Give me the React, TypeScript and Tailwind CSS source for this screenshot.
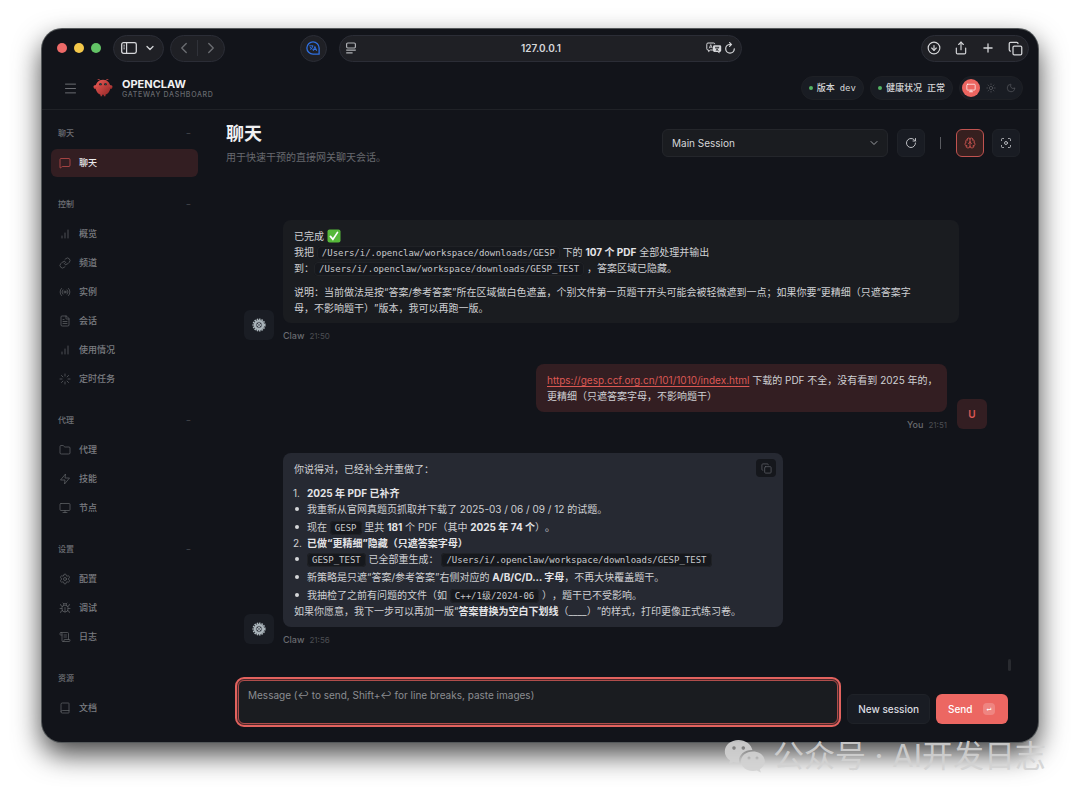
import React, { useState } from 'react';
import {
  Book,
  Brain,
  Bug,
  ChevronDown,
  ChevronLeft,
  ChevronRight,
  CircleArrowDown,
  Copy,
  FileText,
  Focus,
  Folder,
  Link,
  Loader,
  Menu,
  MessageSquare,
  Monitor,
  Moon,
  Plus,
  Radio,
  RotateCw,
  ScrollText,
  Settings,
  Share,
  Sun,
} from 'lucide-react';

type IconProps = { className?: string; strokeWidth?: number };
type IconType = React.ComponentType<IconProps>;

const Bars: React.FC<IconProps> = ({ className, strokeWidth = 1.5 }) => (
  <svg viewBox="0 0 24 24" fill="none" stroke="currentColor" strokeWidth={strokeWidth} strokeLinecap="round" className={className}>
    <path d="M12 20V10M18 20V4M6 20v-4" />
  </svg>
);

const Bolt: React.FC<IconProps> = ({ className, strokeWidth = 1.5 }) => (
  <svg viewBox="0 0 24 24" fill="none" stroke="currentColor" strokeWidth={strokeWidth} strokeLinejoin="round" className={className}>
    <path d="M13 2 3 14h9l-1 8 10-12h-9l1-8z" />
  </svg>
);

const SidebarIcon: React.FC<IconProps> = ({ className }) => (
  <svg viewBox="0 0 16 12" fill="none" stroke="currentColor" className={className}>
    <rect x="0.7" y="0.7" width="14.6" height="10.6" rx="1.8" strokeWidth="1.3" />
    <path d="M5.6 1v10" strokeWidth="1.2" />
    <path d="M2.3 3.2h1.7M2.3 5h1.7M2.3 6.8h1.7" strokeWidth="0.8" />
  </svg>
);

const PageIcon: React.FC<IconProps> = ({ className }) => (
  <svg viewBox="0 0 12 12" fill="none" stroke="currentColor" className={className}>
    <rect x="1.6" y="1" width="8.8" height="5" rx="1.2" strokeWidth="1.2" />
    <path d="M1.2 8.2h9.6M1.2 10.8h6.4" strokeWidth="1.2" />
  </svg>
);

const TranslateBubble: React.FC<IconProps> = ({ className }) => (
  <svg viewBox="0 0 16 16" fill="none" stroke="currentColor" className={className}>
    <path d="M15 8a7 7 0 1 0-7 7h7V8z" strokeWidth="1.5" strokeLinejoin="round" />
    <path d="M3.8 5.5h4.6M4.6 9.6c1.8-.6 2.8-2 3.1-4M4.6 6.8c.6 1.4 1.6 2.4 3 2.8" strokeWidth="1.1" />
    <path d="m8.2 11.2 2-4.6 2 4.6M9 9.8h2.6" strokeWidth="1.2" />
  </svg>
);

const TranslatePage: React.FC<IconProps> = ({ className }) => (
  <svg viewBox="0 0 16 12" fill="none" className={className}>
    <path d="M7 8H4.4L2.6 9.6V8H2A1.2 1.2 0 0 1 .8 6.8V2.2A1.2 1.2 0 0 1 2 1h5.6a1.2 1.2 0 0 1 1.2 1.2" stroke="currentColor" />
    <path d="m3.2 6.4 1.6-3.8 1.6 3.8M3.8 5.2h2" stroke="currentColor" strokeWidth="0.8" />
    <path d="M8.4 3.2h5.4a1.4 1.4 0 0 1 1.4 1.4v4a1.4 1.4 0 0 1-1.4 1.4h-.3v1.6L11.7 10H8.4A1.4 1.4 0 0 1 7 8.6v-4a1.4 1.4 0 0 1 1.4-1.4z" fill="currentColor" />
    <path d="M9 5.3h4.2M9.8 8.7c1.4-.7 2.2-1.8 2.4-3.2M9.9 6.2c.5 1.2 1.4 2.1 2.7 2.5" stroke="#1f2025" strokeWidth="0.9" />
  </svg>
);

const ReloadIcon: React.FC<IconProps> = ({ className }) => (
  <svg viewBox="0 0 12 12" fill="none" stroke="currentColor" strokeWidth="1.2" strokeLinecap="round" className={className}>
    <path d="M10.3 6.8A4.3 4.3 0 1 1 6 2.5h1M5.6.7l1.8 1.8-1.8 1.8" />
  </svg>
);

const LobsterLogo: React.FC<IconProps> = ({ className }) => (
  <svg viewBox="0 0 120 120" className={className} aria-hidden="true">
    <defs>
      <linearGradient id="lobster" x1="0" y1="0" x2="1" y2="1">
        <stop offset="0" stopColor="#ec5a55" />
        <stop offset="1" stopColor="#8f2626" />
      </linearGradient>
    </defs>
    <path d="M60 10C30 10 15 35 15 55s15 40 30 45v10h10v-10s5 2 10 0v10h10v-10c15-5 30-25 30-45S90 10 60 10z" fill="url(#lobster)" />
    <path d="M20 45C5 40 0 50 5 60s15 5 20-5 0-10-5-10zM100 45c15-5 20 5 15 15s-15 5-20-5 0-10 5-10z" fill="url(#lobster)" />
    <path d="M45 15Q35 5 30 8M75 15Q85 5 90 8" stroke="#e0524e" strokeWidth="4" strokeLinecap="round" fill="none" />
    <circle cx="45" cy="37" r="7" fill="#11151c" />
    <circle cx="75" cy="37" r="7" fill="#11151c" />
    <circle cx="46" cy="36" r="3" fill="#3ba99d" />
    <circle cx="76" cy="36" r="3" fill="#3ba99d" />
  </svg>
);

const GearEmoji: React.FC<IconProps> = ({ className }) => (
  <svg viewBox="0 0 24 24" fill="none" className={className}>
    <circle cx="12" cy="12" r="10" stroke="#aeb8be" strokeWidth="2.6" strokeDasharray="2.6 1.588" />
    <circle cx="12" cy="12" r="6.8" stroke="#aab4ba" strokeWidth="4.4" />
    <circle cx="12" cy="12" r="5" stroke="#7d8790" strokeWidth="1" />
    <circle cx="12" cy="12" r="2.6" fill="#59626b" stroke="#c5cdd2" strokeWidth="1.5" />
  </svg>
);

const CheckEmoji = () => (
  <svg viewBox="0 0 14 14" role="img" aria-label="完成" className="inline size-[14px] align-[-3px]">
    <rect x="0.5" y="0.5" width="13" height="13" rx="2" fill="#56b83a" />
    <path d="m3.4 7.4 2.5 3 4.6-7" stroke="#fff" strokeWidth="1.7" fill="none" strokeLinecap="round" />
  </svg>
);

const WeChatIcon: React.FC<IconProps> = ({ className }) => (
  <svg viewBox="0 0 42 34" className={className} aria-hidden="true">
    <path
      fillRule="evenodd"
      d="M14.5 1C6.8 1 .8 6.1.8 12.6c0 3.7 2 6.9 5.2 9l-1.3 4 4.7-2.4c1.9.6 4 .9 6 .8A11 11 0 0 1 15 21.7c0-5.9 5.7-10.6 12.7-10.6h.7C27.2 5.2 21.3 1 14.5 1zM10 7.3a1.8 1.8 0 1 1 0 3.6 1.8 1.8 0 0 1 0-3.6zm9.3 0a1.8 1.8 0 1 1 0 3.6 1.8 1.8 0 0 1 0-3.6z"
      fill="currentColor"
    />
    <path
      fillRule="evenodd"
      d="M29 12.6c-6.8 0-12 4.3-12 9.7s5.2 9.7 12 9.7c1.3 0 2.7-.2 3.9-.5l4 2.1-1.1-3.3c3-1.8 5-4.7 5-8 0-5.4-5.2-9.7-11.8-9.7zm-4 5a1.5 1.5 0 1 1 0 3 1.5 1.5 0 0 1 0-3zm8 0a1.5 1.5 0 1 1 0 3 1.5 1.5 0 0 1 0-3z"
      fill="currentColor"
    />
  </svg>
);

const navGroups: { title: string; collapsible: boolean; items: { label: string; icon: IconType }[] }[] = [
  { title: '聊天', collapsible: true, items: [{ label: '聊天', icon: MessageSquare }] },
  {
    title: '控制',
    collapsible: true,
    items: [
      { label: '概览', icon: Bars },
      { label: '频道', icon: Link },
      { label: '实例', icon: Radio },
      { label: '会话', icon: FileText },
      { label: '使用情况', icon: Bars },
      { label: '定时任务', icon: Loader },
    ],
  },
  {
    title: '代理',
    collapsible: true,
    items: [
      { label: '代理', icon: Folder },
      { label: '技能', icon: Bolt },
      { label: '节点', icon: Monitor },
    ],
  },
  {
    title: '设置',
    collapsible: true,
    items: [
      { label: '配置', icon: Settings },
      { label: '调试', icon: Bug },
      { label: '日志', icon: ScrollText },
    ],
  },
  { title: '资源', collapsible: false, items: [{ label: '文档', icon: Book }] },
];

const BrowserBar = () => (
  <div className="flex h-[38px] shrink-0 items-center px-[14px] text-[#d5d6d9]">
    <div className="flex flex-1 items-center">
      <div className="flex gap-[7px] pl-px">
        <span className="size-[10px] rounded-full bg-[#ed6a68]" />
        <span className="size-[10px] rounded-full bg-[#f4c84a]" />
        <span className="size-[10px] rounded-full bg-[#63c466]" />
      </div>
      <div className="ml-3 flex h-[27px] items-center rounded-full border border-[#2b2d36] bg-[#1f2025] px-[7px]">
        <button type="button" aria-label="Sidebar"><SidebarIcon className="h-3 w-4" /></button>
        <button type="button" aria-label="Tab groups" className="ml-[7px]"><ChevronDown className="size-3" strokeWidth={2.5} /></button>
      </div>
      <div className="ml-[6px] flex h-[27px] items-center rounded-full border border-[#2b2d36] bg-[#1f2025] px-1 text-[#6b6d72]">
        <button type="button" aria-label="Back"><ChevronLeft className="size-[18px]" strokeWidth={1.8} /></button>
        <span className="mx-1 h-4 w-px bg-[#303239]" />
        <button type="button" aria-label="Forward"><ChevronRight className="size-[18px]" strokeWidth={1.8} /></button>
      </div>
      <button
        type="button"
        aria-label="Translate extension"
        className="mr-3 ml-auto flex size-[27px] items-center justify-center rounded-full border border-[#2b2d36] bg-[#1f2025] text-[#2f6fdf]"
      >
        <TranslateBubble className="size-[14px]" />
      </button>
    </div>
    <div className="flex h-[27px] w-[403px] items-center rounded-full border border-[#2b2d36] bg-[#1f2025] px-[5px]">
      <PageIcon className="size-3 text-[#b0b1b5]" />
      <span className="flex-1 pl-5 text-center text-[10px] font-semibold">127.0.0.1</span>
      <TranslatePage className="h-3 w-4" />
      <button type="button" aria-label="Reload" className="ml-[2px]"><ReloadIcon className="size-3" /></button>
    </div>
    <div className="flex flex-1 justify-end">
      <div className="-mr-[5px] flex h-[27px] items-center gap-[13px] rounded-full border border-[#2b2d36] bg-[#1f2025] px-[5px]">
        <button type="button" aria-label="Downloads"><CircleArrowDown className="size-[14px]" strokeWidth={2} /></button>
        <button type="button" aria-label="Share"><Share className="size-[14px]" strokeWidth={2} /></button>
        <button type="button" aria-label="New tab"><Plus className="size-[14px]" strokeWidth={2.2} /></button>
        <button type="button" aria-label="Tab overview"><Copy className="size-[15px]" strokeWidth={2} /></button>
      </div>
    </div>
  </div>
);

const StatusPill = ({ label, children }: { label: string; children: React.ReactNode }) => (
  <div className="flex h-6 items-center rounded-full border border-[#1e2025] bg-[#191c23] px-[7px] text-[9px] leading-3 font-medium text-[#d5d6d8]">
    <span className="mr-1 size-1 rounded-full bg-[#53b463]" />
    <span>{label}</span>
    <span className="ml-[5px]">{children}</span>
  </div>
);

const Header = () => (
  <header className="flex h-[43px] shrink-0 items-center border-b border-[#202227] pr-[15px] pl-5">
    <button type="button" aria-label="Toggle menu" className="flex size-4 items-center justify-center text-[#707277]">
      <Menu className="size-[15px]" strokeWidth={1.5} />
    </button>
    <LobsterLogo className="ml-[15px] size-5" />
    <div className="ml-[9px] pt-[2px]">
      <div className="text-[11px] leading-3 font-bold text-[#f0f0f2]">OPENCLAW</div>
      <div className="text-[7px] leading-[10px] font-medium tracking-widest text-[#67696e]">GATEWAY DASHBOARD</div>
    </div>
    <div className="ml-auto flex items-center gap-[6px]">
      <StatusPill label="版本">
        <span className="font-['DejaVu_Sans_Mono',monospace] font-normal">dev</span>
      </StatusPill>
      <StatusPill label="健康状况">正常</StatusPill>
      <div className="flex h-6 items-center gap-px rounded-full border border-[#1e2025] bg-[#191c23] px-[2px] text-[#5a5c62]">
        <button type="button" aria-label="System theme" className="flex size-[18px] items-center justify-center rounded-full bg-[#ec6560] text-white">
          <Monitor className="size-[10px]" strokeWidth={1.7} />
        </button>
        <button type="button" aria-label="Light theme" className="flex size-[19px] items-center justify-center">
          <Sun className="size-[10px]" strokeWidth={1.6} />
        </button>
        <button type="button" aria-label="Dark theme" className="flex size-[19px] items-center justify-center">
          <Moon className="size-[10px]" strokeWidth={1.6} />
        </button>
      </div>
    </div>
  </header>
);

const Sidebar = ({ active, onSelect }: { active: string; onSelect: (id: string) => void }) => (
  <nav className="flex w-[156px] shrink-0 flex-col gap-[15px] pt-[11px] pl-[9px]">
    {navGroups.map((group) => (
      <div key={group.title} className="flex flex-col gap-px">
        <div className="mb-[3px] flex h-6 items-center justify-between px-[7px] text-[8px] font-medium text-[#6d6f74]">
          <span>{group.title}</span>
          {group.collapsible && <span className="text-[#45474c]">−</span>}
        </div>
        {group.items.map(({ label, icon: Icon }) => {
          const id = `${group.title}/${label}`;
          const selected = id === active;
          return (
            <button
              key={id}
              type="button"
              onClick={() => onSelect(id)}
              className={`flex h-7 items-center gap-2 rounded-md px-2 text-[9px] font-medium ${
                selected ? 'bg-[#331e22] text-[#ececee]' : 'text-[#7b7d81]'
              }`}
            >
              <Icon className={`size-3 ${selected ? 'text-[#c9504e]' : 'text-[#5f6166]'}`} strokeWidth={1.5} />
              {label}
            </button>
          );
        })}
      </div>
    ))}
  </nav>
);

const Code = ({ children }: { children: React.ReactNode }) => (
  <code className="rounded-sm border border-[#202226] bg-[#16181d] px-1 py-px font-['DejaVu_Sans_Mono','Noto_Sans_CJK_SC',monospace] text-[9px] leading-3 text-[#c9cacd]">
    {children}
  </code>
);

const Strong = ({ children }: { children: React.ReactNode }) => (
  <strong className="font-bold text-[#e4e4e7]">{children}</strong>
);

const Avatar = ({ user }: { user?: boolean }) =>
  user ? (
    <div className="mb-1 flex size-[30px] shrink-0 items-center justify-center rounded-md bg-[#331e22] text-[10px] font-semibold text-[#dc5854]">U</div>
  ) : (
    <div className="mb-1 flex size-[30px] shrink-0 items-center justify-center rounded-md bg-[#1a1d24]">
      <GearEmoji className="size-[14px]" />
    </div>
  );

const Meta = ({ name, time }: { name: string; time: string }) => (
  <div className="mt-[5px] flex h-4 items-center gap-[5px] text-[9px]">
    <span className="font-medium text-[#696b70]">{name}</span>
    <span className="text-[8px] text-[#4c4e53]">{time}</span>
  </div>
);

const Bullet = ({ children }: { children: React.ReactNode }) => (
  <li className="flex">
    <span className="flex w-[13px] shrink-0 items-center pl-[1px]">
      <span className="size-1 rounded-full bg-[#d5d6d9]" />
    </span>
    <span>{children}</span>
  </li>
);

const Thread = () => (
  <div className="flex flex-1 flex-col gap-5 pr-[33px] pl-[18px] text-[10px] leading-4 text-[#cfd0d3] [text-spacing-trim:space-all]">
    <div className="flex items-end gap-[9px]">
      <Avatar />
      <div className="mr-7 flex-1">
        <div className="rounded-lg bg-[#1a1c20] px-[11px] pt-2 pb-[7px]">
          <p>
            已完成 <CheckEmoji />
            <br />
            我把 <Code>/Users/i/.openclaw/workspace/downloads/GESP</Code> 下的 <Strong>107 个 PDF</Strong> 全部处理并输出
            <br />
            到：<Code>/Users/i/.openclaw/workspace/downloads/GESP_TEST</Code> ，答案区域已隐藏。
          </p>
          <p className="mt-2">
            说明：当前做法是按“答案/参考答案”所在区域做白色遮盖，个别文件第一页题干开头可能会被轻微遮到一点；如果你要“更精细（只遮答案字
            <br />
            母，不影响题干）”版本，我可以再跑一版。
          </p>
        </div>
        <Meta name="Claw" time="21:50" />
      </div>
    </div>

    <div className="flex items-end justify-end gap-[10px]">
      <div className="flex flex-col items-end">
        <div className="w-[411px] rounded-lg bg-[#331e22] py-2 pr-1 pl-[11px]">
          <a href="https://gesp.ccf.org.cn/101/1010/index.html" className="text-[#dc5854] underline underline-offset-2">
            https://gesp.ccf.org.cn/101/1010/index.html
          </a>{' '}
          下载的 PDF 不全，没有看到 2025 年的，
          <br />
          更精细（只遮答案字母，不影响题干）
        </div>
        <Meta name="You" time="21:51" />
      </div>
      <Avatar user />
    </div>

    <div className="flex items-end gap-[9px]">
      <Avatar />
      <div>
        <div className="relative w-[500px] rounded-lg bg-[#262932] px-[11px] py-2">
          <button
            type="button"
            aria-label="Copy message"
            className="absolute top-[6px] right-[7px] flex h-[18px] w-5 items-center justify-center rounded bg-[#15171c] text-[#5c5e64]"
          >
            <Copy className="size-[11px]" strokeWidth={1.7} />
          </button>
          <p>你说得对，已经补全并重做了：</p>
          <div className="mt-2 flex">
            <span className="-ml-px w-[14px]">1.</span>
            <Strong>2025 年 PDF 已补齐</Strong>
          </div>
          <ul className="flex flex-col gap-[2px]">
            <Bullet>我重新从官网真题页抓取并下载了 2025-03 / 06 / 09 / 12 的试题。</Bullet>
            <Bullet>
              现在 <Code>GESP</Code> 里共 <Strong>181</Strong> 个 PDF（其中 <Strong>2025 年 74 个</Strong>）。
            </Bullet>
          </ul>
          <div className="flex">
            <span className="-ml-px w-[14px]">2.</span>
            <Strong>已做“更精细”隐藏（只遮答案字母）</Strong>
          </div>
          <ul className="flex flex-col gap-[2px]">
            <Bullet>
              <Code>GESP_TEST</Code> 已全部重生成： <Code>/Users/i/.openclaw/workspace/downloads/GESP_TEST</Code>
            </Bullet>
            <Bullet>
              新策略是只遮“答案/参考答案”右侧对应的 <Strong>A/B/C/D… 字母</Strong>，不再大块覆盖题干。
            </Bullet>
            <Bullet>
              我抽检了之前有问题的文件（如 <Code>C++/1级/2024-06</Code> ），题干已不受影响。
            </Bullet>
          </ul>
          <p>
            如果你愿意，我下一步可以再加一版“<Strong>答案替换为空白下划线</Strong>（____）”的样式，打印更像正式练习卷。
          </p>
        </div>
        <Meta name="Claw" time="21:56" />
      </div>
    </div>
  </div>
);

const Composer = () => {
  const [draft, setDraft] = useState('');
  return (
    <form className="mr-3 ml-[9px] flex items-end gap-[6px] pb-[15px]" onSubmit={(e) => e.preventDefault()}>
      <div className="flex flex-1 rounded-[9px] border-2 border-[#e2625e] bg-[#4b282b] p-px">
        <textarea
          aria-label="Message"
          value={draft}
          onChange={(e) => setDraft(e.target.value)}
          placeholder="Message (↩ to send, Shift+↩ for line breaks, paste images)"
          className="block h-[44px] w-full resize-none rounded-md border border-[#b04d4b] bg-[#1a1c20] px-[9px] py-[6px] text-[10px] leading-4 text-[#d5d6d9] outline-none placeholder:text-[#8b8d91]"
        />
      </div>
      <button type="button" className="mb-[3px] h-[30px] rounded-md border border-[#1f2228] bg-[#191c23] px-[10px] text-[10px] font-medium text-[#dcdde0]">
        New session
      </button>
      <button type="submit" className="mb-[3px] flex h-[30px] w-[72px] items-center justify-between rounded-md bg-[#ec6762] pr-[13px] pl-3 text-[10px] font-medium text-white">
        Send
        <kbd className="flex h-3 w-3 items-center justify-center rounded-sm bg-white/20 font-['DejaVu_Sans_Mono',monospace] text-[8px] leading-none">↵</kbd>
      </button>
    </form>
  );
};

const iconButton = 'flex size-7 items-center justify-center rounded-md border';

const App: React.FC = () => {
  const [active, setActive] = useState('聊天/聊天');

  return (
    <div className="relative flex min-h-screen flex-col overflow-hidden bg-white px-[42px] pt-[29px] pb-14 font-['Inter','Noto_Sans_CJK_SC',sans-serif]">
      <div className="flex flex-1 flex-col rounded-[20px] bg-[#12141a] shadow-[0_0_0_1px_#54585a,0_12px_28px_rgba(0,0,0,0.75)]">
        <BrowserBar />
        <Header />
        <div className="flex flex-1">
          <Sidebar active={active} onSelect={setActive} />
          <main className="flex flex-1 flex-col pr-[18px] pl-7">
            <div className="flex items-start pt-3">
              <div>
                <h1 className="text-[18px] leading-6 font-bold text-[#f0f0f2]">聊天</h1>
                <p className="mt-[3px] text-[10px] leading-4 text-[#686a6f]">用于快速干预的直接网关聊天会话。</p>
              </div>
              <div className="mt-[7px] ml-auto flex items-center">
                <div className="relative flex items-center">
                  <select
                    aria-label="Session"
                    className="h-7 w-[226px] appearance-none rounded-md border border-[#24262b] bg-[#1a1c20] px-[9px] text-[10px] text-[#d5d6d9]"
                  >
                    <option>Main Session</option>
                  </select>
                  <ChevronDown className="pointer-events-none absolute right-2 size-3 text-[#9b9da1]" />
                </div>
                <button type="button" aria-label="Refresh" className={`ml-[9px] border-[#1f2228] bg-[#191c23] text-[#c4c5c9] ${iconButton}`}>
                  <RotateCw className="size-3" strokeWidth={1.9} />
                </button>
                <span className="mx-[15px] h-3 w-px bg-[#5a5c61]" />
                <button type="button" aria-label="Toggle thinking" className={`border-[#c05350] bg-[#36201f] text-[#d05652] ${iconButton}`}>
                  <Brain className="size-3" strokeWidth={1.7} />
                </button>
                <button type="button" aria-label="Focus mode" className={`ml-2 border-[#1f2228] bg-[#191c23] text-[#b9bbbf] ${iconButton}`}>
                  <Focus className="size-3" strokeWidth={1.9} />
                </button>
              </div>
            </div>
            <div className="flex flex-1 flex-col pt-[55px]">
              <Thread />
              <div className="mr-[9px] mb-[6px] h-3 w-[3px] self-end rounded-full bg-[#292b30]" />
              <Composer />
            </div>
          </main>
        </div>
      </div>

      <div className="pointer-events-none absolute right-[34px] bottom-[22px] flex items-center gap-[7px] text-[#d2d2d2]/90">
        <WeChatIcon className="h-[34px] w-[42px]" />
        <span className="text-[31px] leading-10 whitespace-pre">公众号 · AI开发日志</span>
      </div>
    </div>
  );
};

export default App;
